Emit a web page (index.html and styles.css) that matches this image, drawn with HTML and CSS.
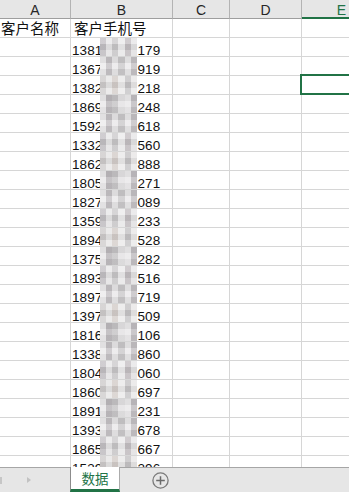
FILE: index.html
```html
<!DOCTYPE html>
<html lang="zh">
<head>
<meta charset="utf-8">
<title>数据</title>
<link rel="stylesheet" href="styles.css">
</head>
<body>
<div class="app">
  <div class="sheet">
    <div class="grid">
      <div class="c ch">A</div><div class="c ch">B</div><div class="c ch">C</div><div class="c ch">D</div><div class="c ch sel">E</div>
      <div class="c t1">客户名称</div><div class="c t2">客户手机号</div><div class="c"></div><div class="c"></div><div class="c"></div>
      <div class="c"></div><div class="c n"><span class="p">1381</span><span class="mz m1"></span><span class="s">179</span></div><div class="c"></div><div class="c"></div><div class="c"></div>
      <div class="c"></div><div class="c n"><span class="p">1367</span><span class="mz m2"></span><span class="s">919</span></div><div class="c"></div><div class="c"></div><div class="c"></div>
      <div class="c"></div><div class="c n"><span class="p">1382</span><span class="mz m3"></span><span class="s">218</span></div><div class="c"></div><div class="c"></div><div class="c"></div>
      <div class="c"></div><div class="c n"><span class="p">1869</span><span class="mz m4"></span><span class="s">248</span></div><div class="c"></div><div class="c"></div><div class="c"></div>
      <div class="c"></div><div class="c n"><span class="p">1592</span><span class="mz m2"></span><span class="s">618</span></div><div class="c"></div><div class="c"></div><div class="c"></div>
      <div class="c"></div><div class="c n"><span class="p">1332</span><span class="mz m1"></span><span class="s">560</span></div><div class="c"></div><div class="c"></div><div class="c"></div>
      <div class="c"></div><div class="c n"><span class="p">1862</span><span class="mz m3"></span><span class="s">888</span></div><div class="c"></div><div class="c"></div><div class="c"></div>
      <div class="c"></div><div class="c n"><span class="p">1805</span><span class="mz m4"></span><span class="s">271</span></div><div class="c"></div><div class="c"></div><div class="c"></div>
      <div class="c"></div><div class="c n"><span class="p">1827</span><span class="mz m2"></span><span class="s">089</span></div><div class="c"></div><div class="c"></div><div class="c"></div>
      <div class="c"></div><div class="c n"><span class="p">1359</span><span class="mz m1"></span><span class="s">233</span></div><div class="c"></div><div class="c"></div><div class="c"></div>
      <div class="c"></div><div class="c n"><span class="p">1894</span><span class="mz m3"></span><span class="s">528</span></div><div class="c"></div><div class="c"></div><div class="c"></div>
      <div class="c"></div><div class="c n"><span class="p">1375</span><span class="mz m4"></span><span class="s">282</span></div><div class="c"></div><div class="c"></div><div class="c"></div>
      <div class="c"></div><div class="c n"><span class="p">1893</span><span class="mz m1"></span><span class="s">516</span></div><div class="c"></div><div class="c"></div><div class="c"></div>
      <div class="c"></div><div class="c n"><span class="p">1897</span><span class="mz m2"></span><span class="s">719</span></div><div class="c"></div><div class="c"></div><div class="c"></div>
      <div class="c"></div><div class="c n"><span class="p">1397</span><span class="mz m3"></span><span class="s">509</span></div><div class="c"></div><div class="c"></div><div class="c"></div>
      <div class="c"></div><div class="c n"><span class="p">1816</span><span class="mz m4"></span><span class="s">106</span></div><div class="c"></div><div class="c"></div><div class="c"></div>
      <div class="c"></div><div class="c n"><span class="p">1338</span><span class="mz m2"></span><span class="s">860</span></div><div class="c"></div><div class="c"></div><div class="c"></div>
      <div class="c"></div><div class="c n"><span class="p">1804</span><span class="mz m1"></span><span class="s">060</span></div><div class="c"></div><div class="c"></div><div class="c"></div>
      <div class="c"></div><div class="c n"><span class="p">1860</span><span class="mz m3"></span><span class="s">697</span></div><div class="c"></div><div class="c"></div><div class="c"></div>
      <div class="c"></div><div class="c n"><span class="p">1891</span><span class="mz m4"></span><span class="s">231</span></div><div class="c"></div><div class="c"></div><div class="c"></div>
      <div class="c"></div><div class="c n"><span class="p">1393</span><span class="mz m2"></span><span class="s">678</span></div><div class="c"></div><div class="c"></div><div class="c"></div>
      <div class="c"></div><div class="c n"><span class="p">1865</span><span class="mz m1"></span><span class="s">667</span></div><div class="c"></div><div class="c"></div><div class="c"></div>
      <div class="c"></div><div class="c n"><span class="p">1539</span><span class="mz m3"></span><span class="s">296</span></div><div class="c"></div><div class="c"></div><div class="c"></div>
    </div>
    <div class="cursor"></div>
  </div>
  <div class="tabs">
    <div class="nav">
      <span class="a1"></span>
      <span class="a2"></span>
    </div>
    <div class="tab">数据</div>
    <svg class="add" width="17" height="17" viewBox="0 0 17 17">
      <circle cx="8.5" cy="8.5" r="7.6" fill="none" stroke="#7a7a7a" stroke-width="1.3"/>
      <path d="M8.5 4.2v8.6M4.2 8.5h8.6" stroke="#6a6a6a" stroke-width="1.5" fill="none"/>
    </svg>
  </div>
</div>
</body>
</html>
```
FILE: styles.css
```css
html, body {
  margin: 0;
  padding: 0;
  background: #ffffff;
}
.app {
  width: 349px;
  height: 492px;
  display: flex;
  flex-direction: column;
  overflow: hidden;
}
.sheet {
  position: relative;
  height: 467px;
  overflow: hidden;
  flex: none;
}
.grid {
  display: grid;
  grid-template-columns: 71px 102px 57px 72px 80px;
  grid-auto-rows: 19px;
  width: 382px;
}
.c {
  box-sizing: border-box;
  border-right: 1px solid #d6d6d6;
  border-bottom: 1px solid #d6d6d6;
  white-space: nowrap;
  min-width: 0;
}
.ch {
  background: #e6e6e6;
  border-right-color: #b3b3b3;
  border-bottom-color: #9e9e9e;
  text-align: center;
  font: 14px/14px "Liberation Sans", Arial, sans-serif;
  color: #262626;
  padding-top: 3px;
}
.ch.sel {
  color: #217346;
  border-bottom: 2px solid #217346;
}
.t1, .t2 {
  font: 14.5px/18px "Noto Sans CJK SC", sans-serif;
  color: #111;
}
.t1 {
  padding-left: 1px;
}
.t2 {
  padding-left: 3px;
}
.n {
  display: flex;
  font: 13.5px "Liberation Sans", Arial, sans-serif;
  letter-spacing: 0.1px;
  color: #111;
  padding-left: 1px;
  overflow: hidden;
}
.n .p, .n .s {
  padding-top: 7px;
  line-height: 11px;
  flex: none;
}
.mz {
  flex: none;
  width: 37px;
  height: 18px;
  margin-left: -2px;
}
.m1 {
  background:
    linear-gradient(90deg, rgba(90,80,95,.14) 0 6px, rgba(255,255,255,.35) 6px 12px, rgba(60,60,60,.08) 12px 18px, rgba(255,255,255,.45) 18px 25px, rgba(110,90,100,.16) 25px 31px, rgba(255,255,255,.3) 31px),
    linear-gradient(180deg, rgba(255,255,255,.35) 0 6px, rgba(0,0,0,.06) 6px 12px, rgba(255,255,255,.15) 12px),
    #d5d3d5;
}
.m2 {
  background:
    linear-gradient(90deg, rgba(255,255,255,.4) 0 6px, rgba(80,70,80,.15) 6px 12px, rgba(255,255,255,.3) 12px 18px, rgba(90,90,90,.12) 18px 25px, rgba(255,255,255,.35) 25px 31px, rgba(70,60,70,.14) 31px),
    linear-gradient(180deg, rgba(0,0,0,.05) 0 6px, rgba(255,255,255,.35) 6px 12px, rgba(0,0,0,.04) 12px),
    #d8d6d8;
}
.m3 {
  background:
    linear-gradient(90deg, rgba(120,110,110,.1) 0 6px, rgba(255,255,255,.3) 6px 12px, rgba(180,150,130,.15) 12px 18px, rgba(255,255,255,.4) 18px 25px, rgba(90,90,100,.14) 25px 31px, rgba(255,255,255,.35) 31px),
    linear-gradient(180deg, rgba(255,255,255,.25) 0 6px, rgba(0,0,0,.06) 6px 12px, rgba(255,255,255,.3) 12px),
    #d9d7d7;
}
.m4 {
  background:
    linear-gradient(90deg, rgba(255,255,255,.45) 0 6px, rgba(70,60,70,.16) 6px 12px, rgba(80,80,80,.1) 12px 18px, rgba(255,255,255,.3) 18px 25px, rgba(255,255,255,.45) 25px 31px, rgba(90,80,90,.15) 31px),
    linear-gradient(180deg, rgba(0,0,0,.06) 0 6px, rgba(255,255,255,.25) 6px 12px, rgba(0,0,0,.03) 12px),
    #d3d1d3;
}
.cursor {
  position: absolute;
  left: 300px;
  top: 74px;
  width: 70px;
  height: 21px;
  box-sizing: border-box;
  border: 2px solid #217346;
}
.tabs {
  flex: none;
  height: 25px;
  box-sizing: border-box;
  border-top: 1px solid #a6a6a6;
  background: #e6e6e6;
  display: flex;
  align-items: center;
}
.nav {
  width: 70px;
  flex: none;
  display: flex;
  align-items: center;
}
.a1 {
  width: 2px;
  height: 7px;
  background: #c6c6c6;
}
.a2 {
  margin-left: 25px;
  width: 0;
  height: 0;
  border-top: 3.5px solid transparent;
  border-bottom: 3.5px solid transparent;
  border-left: 4px solid #c2c2c2;
}
.tab {
  flex: none;
  align-self: stretch;
  margin-top: -1px;
  width: 50px;
  box-sizing: border-box;
  background: #ffffff;
  border-left: 1px solid #8c8c8c;
  border-right: 1px solid #ababab;
  border-bottom: 3px solid #217346;
  font: 13.5px/22px "Noto Sans CJK SC", sans-serif;
  color: #217346;
  text-align: center;
}
.add {
  flex: none;
  margin-left: 32px;
  display: block;
}
```
